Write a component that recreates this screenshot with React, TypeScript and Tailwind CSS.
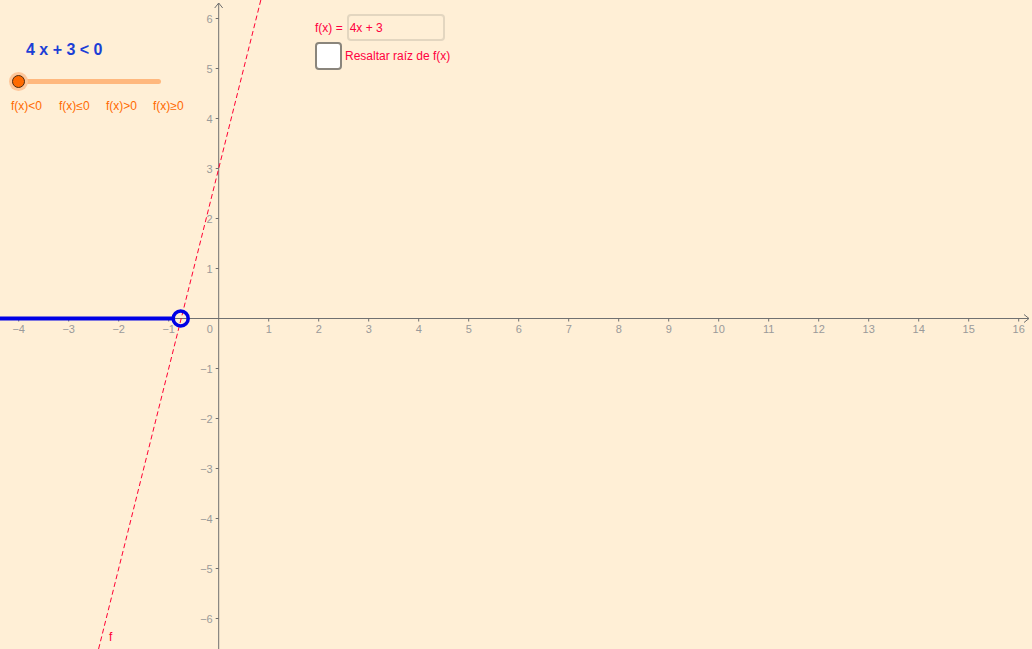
import React from 'react';

const OX = 218.7;
const OY = 318.5;
const U = 50;

const px = (x: number) => OX + x * U;
const py = (y: number) => OY - y * U;

function Graph() {
  const xs = Array.from({ length: 21 }, (_, i) => i - 4).filter(v => v !== 0);
  const ys = [-6, -5, -4, -3, -2, -1, 1, 2, 3, 4, 5, 6];
  const fmt = (v: number) => (v < 0 ? `\u2212${-v}` : `${v}`);
  // f(x) = 4x + 3
  const yTop = OY / U;
  const yBot = -(649 - OY) / U;
  const x1 = (yTop - 3) / 4;
  const x2 = (yBot - 3) / 4;

  return (
    <svg width="1032" height="649" className="block" style={{ fontFamily: 'Arial, "Liberation Sans", sans-serif' }}>
      {/* axes */}
      <line x1={0} y1={OY} x2={1029} y2={OY} stroke="#707070" strokeWidth={1} />
      <path d={`M1024 ${OY - 4} L1029 ${OY} L1024 ${OY + 4}`} fill="none" stroke="#707070" strokeWidth={1} />
      <line x1={OX} y1={3} x2={OX} y2={649} stroke="#707070" strokeWidth={1} />
      <path d={`M${OX - 4} 8 L${OX} 3 L${OX + 4} 8`} fill="none" stroke="#707070" strokeWidth={1} />

      {xs.map(v => (
        <g key={`x${v}`}>
          <line x1={px(v)} y1={OY} x2={px(v)} y2={OY + 3} stroke="#707070" />
          <text x={px(v)} y={OY + 14} fontSize={11} fill="#9a9a9a" textAnchor="middle">
            {fmt(v)}
          </text>
        </g>
      ))}
      <text x={OX - 9} y={OY + 14} fontSize={11} fill="#9a9a9a" textAnchor="middle">0</text>
      {ys.map(v => (
        <g key={`y${v}`}>
          <line x1={OX - 3} y1={py(v)} x2={OX} y2={py(v)} stroke="#707070" />
          <text x={OX - 6} y={py(v) + 4} fontSize={11} fill="#9a9a9a" textAnchor="end">
            {fmt(v)}
          </text>
        </g>
      ))}

      {/* function line */}
      <line
        x1={px(x1)}
        y1={0}
        x2={px(x2)}
        y2={649}
        stroke="#ff0033"
        strokeWidth={1}
        strokeDasharray="5 3"
      />
      <text x={109} y={641} fontSize={12} fill="#ff0033">f</text>

      {/* solution set */}
      <line x1={0} y1={OY} x2={px(-0.75) - 8} y2={OY} stroke="#0000e6" strokeWidth={4} />
      <circle cx={px(-0.75) - 0.5} cy={OY} r={7.5} fill="none" stroke="#0000e6" strokeWidth={3.5} />
    </svg>
  );
}

export default function App() {
  const red = 'text-[#ff0040]';
  return (
    <div className="relative w-[1032px] h-[649px] overflow-hidden bg-[#ffefd6] font-['Liberation_Sans',Arial,sans-serif]">
      <Graph />

      {/* inequality */}
      <div className="absolute left-[26px] top-[38px] text-[16px] font-bold text-[#1c3fd6] whitespace-pre">
        4 x + 3 &lt; 0
      </div>

      {/* slider */}
      <div className="absolute left-[9px] top-[71px] w-[155px] h-[20px] flex items-center">
        <div className="absolute left-[9px] right-[3px] h-[5px] rounded-full bg-[#ffb87e]" />
        <div className="relative w-[19px] h-[19px] rounded-full bg-[#ffc79a] flex items-center justify-center">
          <div className="w-[13px] h-[13px] rounded-full bg-[#ff6a00] border border-[#4a2a10]" />
        </div>
      </div>
      <div className="absolute left-[11px] top-[97px] flex text-[12px] text-[#ff6a00]">
        <span className="w-[48px]">f(x)&lt;0</span>
        <span className="w-[47px]">f(x)≤0</span>
        <span className="w-[47px]">f(x)&gt;0</span>
        <span>f(x)≥0</span>
      </div>

      {/* input */}
      <div className="absolute left-[315px] top-[14px] flex items-center gap-[4px]">
        <span className={`text-[12px] ${red}`}>f(x) =</span>
        <div className="w-[98px] h-[27px] rounded-[4px] border-2 border-[#e3d6c0] flex items-center px-[1px]">
          <span className={`text-[12px] ${red}`}>4x + 3</span>
        </div>
      </div>

      {/* checkbox */}
      <div className="absolute left-[315px] top-[42px] flex items-center gap-[3px]">
        <div className="w-[27px] h-[28px] rounded-[4px] bg-white border-2 border-[#8a857c]" />
        <span className={`text-[12px] ${red}`}>Resaltar raíz de f(x)</span>
      </div>
    </div>
  );
}
